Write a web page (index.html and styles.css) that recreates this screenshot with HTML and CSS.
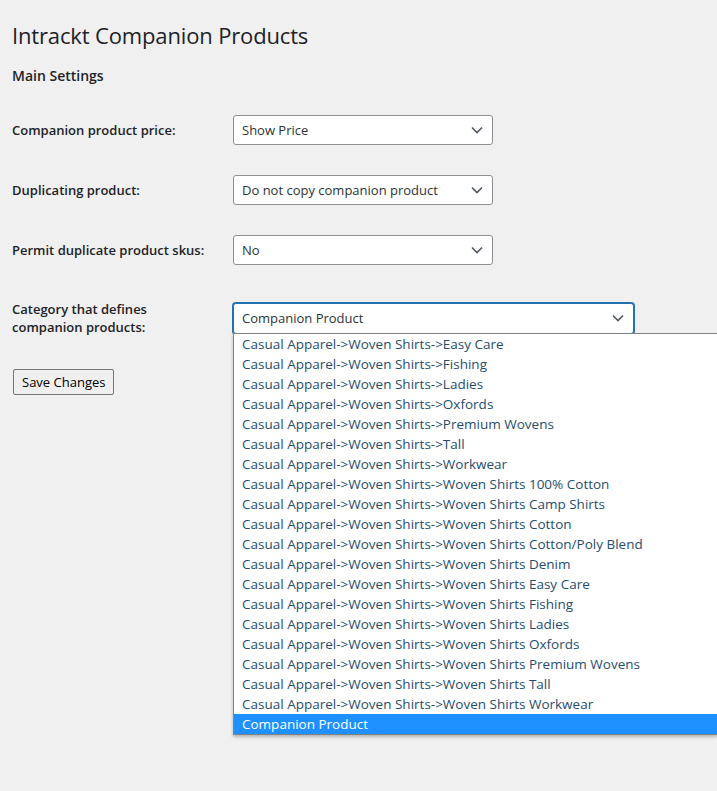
FILE: index.html
```html
<!DOCTYPE html>
<html>
<head>
<meta charset="utf-8">
<link rel="stylesheet" href="styles.css">
</head>
<body>
<div class="wrap">
  <h1 class="page-title">Intrackt Companion Products</h1>
  <h2 class="section-title">Main Settings</h2>
  <div class="form">
    <div class="row">
      <label class="label">Companion product price:</label>
      <div class="select w-260"><span>Show Price</span><svg class="chev" width="12" height="8" viewBox="0 0 12 8"><path d="M1 1.5 6 6.5 11 1.5" fill="none" stroke="#50575e" stroke-width="1.6"/></svg></div>
    </div>
    <div class="row">
      <label class="label">Duplicating product:</label>
      <div class="select w-260"><span>Do not copy companion product</span><svg class="chev" width="12" height="8" viewBox="0 0 12 8"><path d="M1 1.5 6 6.5 11 1.5" fill="none" stroke="#50575e" stroke-width="1.6"/></svg></div>
    </div>
    <div class="row">
      <label class="label">Permit duplicate product skus:</label>
      <div class="select w-260"><span>No</span><svg class="chev" width="12" height="8" viewBox="0 0 12 8"><path d="M1 1.5 6 6.5 11 1.5" fill="none" stroke="#50575e" stroke-width="1.6"/></svg></div>
    </div>
    <div class="row row-tall">
      <label class="label">Category that defines companion products:</label>
      <div class="select-wrap">
        <div class="select w-400 focused"><span>Companion Product</span><svg class="chev" width="12" height="8" viewBox="0 0 12 8"><path d="M1 1.5 6 6.5 11 1.5" fill="none" stroke="#50575e" stroke-width="1.6"/></svg></div>
        <ul class="dropdown">
          <li>Casual Apparel-&gt;Woven Shirts-&gt;Easy Care</li>
          <li>Casual Apparel-&gt;Woven Shirts-&gt;Fishing</li>
          <li>Casual Apparel-&gt;Woven Shirts-&gt;Ladies</li>
          <li>Casual Apparel-&gt;Woven Shirts-&gt;Oxfords</li>
          <li>Casual Apparel-&gt;Woven Shirts-&gt;Premium Wovens</li>
          <li>Casual Apparel-&gt;Woven Shirts-&gt;Tall</li>
          <li>Casual Apparel-&gt;Woven Shirts-&gt;Workwear</li>
          <li>Casual Apparel-&gt;Woven Shirts-&gt;Woven Shirts 100% Cotton</li>
          <li>Casual Apparel-&gt;Woven Shirts-&gt;Woven Shirts Camp Shirts</li>
          <li>Casual Apparel-&gt;Woven Shirts-&gt;Woven Shirts Cotton</li>
          <li>Casual Apparel-&gt;Woven Shirts-&gt;Woven Shirts Cotton/Poly Blend</li>
          <li>Casual Apparel-&gt;Woven Shirts-&gt;Woven Shirts Denim</li>
          <li>Casual Apparel-&gt;Woven Shirts-&gt;Woven Shirts Easy Care</li>
          <li>Casual Apparel-&gt;Woven Shirts-&gt;Woven Shirts Fishing</li>
          <li>Casual Apparel-&gt;Woven Shirts-&gt;Woven Shirts Ladies</li>
          <li>Casual Apparel-&gt;Woven Shirts-&gt;Woven Shirts Oxfords</li>
          <li>Casual Apparel-&gt;Woven Shirts-&gt;Woven Shirts Premium Wovens</li>
          <li>Casual Apparel-&gt;Woven Shirts-&gt;Woven Shirts Tall</li>
          <li>Casual Apparel-&gt;Woven Shirts-&gt;Woven Shirts Workwear</li>
          <li class="selected">Companion Product</li>
        </ul>
      </div>
    </div>
  </div>
  <button class="save">Save Changes</button>
</div>
</body>
</html>
```
FILE: styles.css
```css
html, body {
  margin: 0;
  padding: 0;
  background: #f0f0f1;
  overflow: hidden;
  height: 100%;
}
body {
  font-family: "Open Sans", "Noto Sans", sans-serif;
  color: #1d2327;
  font-size: 13px;
}
.wrap {
  padding: 0 0 0 12px;
}
.page-title {
  margin: 0;
  padding-top: 20px;
  font-size: 22px;
  font-weight: 400;
  line-height: 30px;
  letter-spacing: -0.15px;
}
.section-title {
  margin: 0;
  padding-top: 15px;
  font-size: 14px;
  font-weight: 600;
  line-height: 22px;
}
.form {
  margin-top: 13px;
  display: flex;
  flex-direction: column;
}
.row {
  display: flex;
  align-items: center;
  height: 60px;
}
.row-tall {
  height: 76px;
}
.label {
  width: 200px;
  margin-right: 21px;
  font-weight: 600;
  font-size: 13px;
  line-height: 18px;
}
.select-wrap {
  position: relative;
}
.select {
  box-sizing: border-box;
  height: 30px;
  background: #fff;
  border: 1px solid #8c8f94;
  border-radius: 3px;
  display: flex;
  align-items: center;
  justify-content: space-between;
  padding: 0 9px 0 8px;
  color: #2c3338;
  font-size: 13px;
}
.w-260 { width: 260px; }
.w-400 { width: 401px; }
.select.focused {
  border-color: #2271b1;
  box-shadow: 0 0 0 1px #2271b1;
  height: 31px;
}
.chev { display: block; }
.dropdown {
  position: absolute;
  top: 30px;
  left: 0;
  width: 483px;
  margin: 0;
  padding: 0;
  list-style: none;
  background: #fff;
  border: 1px solid #828282;
  border-right: none;
  box-shadow: 0 2px 3px rgba(0,0,0,0.25);
  z-index: 5;
  overflow: hidden;
}
.dropdown li {
  height: 20px;
  line-height: 20px;
  padding-left: 8px;
  color: #1f4d6e;
  font-size: 13.5px;
  white-space: nowrap;
}
.dropdown li.selected {
  background: #1e90ff;
  color: #fff;
}
.save {
  margin-top: 13px;
  margin-left: 1px;
  height: 26px;
  padding: 0 8px;
  font-family: "Open Sans", "Noto Sans", sans-serif;
  font-size: 13px;
  color: #000;
  background: #efefef;
  border: 1px solid #767676;
  border-radius: 2px;
}
```
